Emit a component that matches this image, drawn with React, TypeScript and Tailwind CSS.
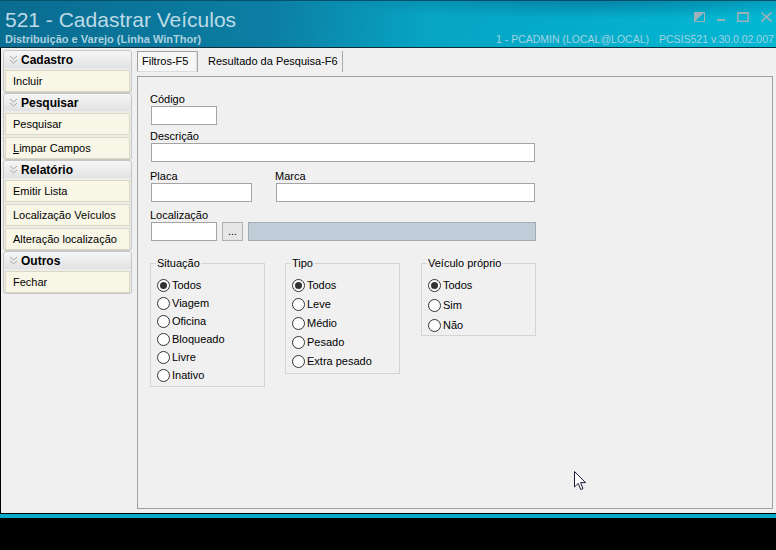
import React from 'react';

const font = "font-['Liberation_Sans',Arial,sans-serif]";

const Chevrons: React.FC = () => (
  <svg width="9" height="9" viewBox="0 0 9 9" className="shrink-0">
    <path d="M1 1 L4.5 4 L8 1 M1 5 L4.5 8 L8 5" fill="none" stroke="#a8a8a8" strokeWidth="1" />
  </svg>
);

interface GroupProps {
  title: string;
  items: { label: React.ReactNode; key: string }[];
}

const SideGroup: React.FC<GroupProps> = ({ title, items }) => (
  <div className="w-[129px] border border-[#c6c6c6] rounded-[3px] bg-[#ececec] flex flex-col">
    <div className="h-[17px] flex items-center gap-[3px] pl-[5px] rounded-t-[3px] bg-[linear-gradient(#f6f6f6,#e2e2e2)]">
      <Chevrons />
      <span className="text-[12px] font-bold text-black leading-none">{title}</span>
    </div>
    <div className="flex flex-col gap-[2px] px-[1px] pt-[2px]">
      {items.map((it) => (
        <div
          key={it.key}
          className="h-[22px] flex items-center pl-[7px] bg-[#f8f6e6] border border-[#dcd8c2] text-[11px] text-black"
        >
          {it.label}
        </div>
      ))}
    </div>
  </div>
);

const Radio: React.FC<{ label: string; checked?: boolean; rowClass: string }> = ({ label, checked, rowClass }) => (
  <div className={`flex items-center ${rowClass}`}>
    <div className="w-[13px] h-[13px] rounded-full border border-[#333] bg-white flex items-center justify-center">
      {checked && <div className="w-[7px] h-[7px] rounded-full bg-[#333]" />}
    </div>
    <span className="ml-[2px] text-[11px] text-black">{label}</span>
  </div>
);

// bodyClass carries the vertical padding of each box
const Group: React.FC<{ legend: string; children: React.ReactNode; bodyClass: string }> = ({ legend, children, bodyClass }) => (
  <fieldset className="w-[115px] border border-[#d4d4d4] m-0 p-0">
    <legend className="ml-[5px] px-[1px] text-[11px] leading-[13px] text-black">{legend}</legend>
    <div className={`flex flex-col pl-[6px] ${bodyClass}`}>{children}</div>
  </fieldset>
);

const Label: React.FC<{ children: React.ReactNode }> = ({ children }) => (
  <div className="h-[14px] leading-[14px] text-[11px] text-black">{children}</div>
);

export default function App() {
  return (
    <div className={`relative w-[776px] h-[550px] bg-black flex flex-col overflow-hidden ${font}`}>
      {/* title bar */}
      <div className="h-[48px] border-t border-[#05506b] border-b border-b-[#0b2f3c] flex flex-col bg-[radial-gradient(ellipse_55%_70%_at_78%_-10%,rgba(8,90,130,0.6),transparent_70%),linear-gradient(100deg,#0a6c91_0%,#0c7ea3_35%,#07a4c4_55%,#02b8d3_100%)]">
        <div className="flex items-start h-[24px] mt-[7px]">
          <span className="ml-[5px] text-[21px] leading-[24px] text-[#bddbe6]">521 - Cadastrar Veículos</span>
          <div className="ml-auto flex items-center gap-[12px] mt-[4px] mr-[4px]">
            <svg width="11" height="10" viewBox="0 0 11 10">
              <rect x="0.5" y="0.5" width="10" height="9" fill="none" stroke="#9db1b9" />
              <path d="M0 0 L11 0 L0 10 Z" fill="#9db1b9" />
            </svg>
            <svg width="8" height="10" viewBox="0 0 8 10">
              <rect x="0" y="7" width="8" height="2" fill="#9db1b9" />
            </svg>
            <svg width="12" height="10" viewBox="0 0 12 10">
              <rect x="0.75" y="1" width="10.5" height="8.25" fill="none" stroke="#9db1b9" strokeWidth="1.5" />
              <rect x="0" y="0" width="12" height="2" fill="#9db1b9" />
            </svg>
            <svg width="11" height="10" viewBox="0 0 11 10">
              <path d="M0.5 0.5 L10.5 9.5 M10.5 0.5 L0.5 9.5" stroke="#9db1b9" strokeWidth="1.6" />
            </svg>
          </div>
        </div>
        <div className="flex items-center h-[13px] mt-[1px]">
          <span className="ml-[5px] text-[11px] font-bold text-[#aad1df]">Distribuição e Varejo (Linha WinThor)</span>
          <div className="ml-auto flex text-[10.5px] text-[#a3d2e2] whitespace-nowrap">
            <span className="w-[163px]">1 - PCADMIN (LOCAL@LOCAL)</span>
            <span className="w-[52px]">PCSIS521</span>
            <span className="w-[65px]">v.30.0.02.007</span>
          </div>
        </div>
        <div className="mt-auto mb-[1px] ml-auto w-[323px] h-[1px] bg-[#f0921e]" />
      </div>

      {/* body */}
      <div className="h-[465px] flex bg-[#f0f0f0] border-l border-black">
        <div className="w-[133px] pl-[2px] pt-[2px] flex flex-col">
          <SideGroup title="Cadastro" items={[{ key: 'i', label: 'Incluir' }]} />
          <SideGroup
            title="Pesquisar"
            items={[
              { key: 'p', label: 'Pesquisar' },
              { key: 'l', label: <span><span className="underline">L</span>impar Campos</span> },
            ]}
          />
          <SideGroup
            title="Relatório"
            items={[
              { key: 'e', label: 'Emitir Lista' },
              { key: 'lv', label: 'Localização Veículos' },
              { key: 'al', label: 'Alteração localização' },
            ]}
          />
          <SideGroup title="Outros" items={[{ key: 'f', label: 'Fechar' }]} />
        </div>

        <div className="flex-1 flex flex-col pl-[3px] pr-[3px] pt-[3px] pb-[4px]">
          <div className="flex h-[21px]">
            <div className="w-[60px] pl-[4px] flex items-center text-[11px] text-black bg-[#f6f6f6] border border-[#a0a0a0] border-r-[#dcdcdc] border-b-[#dcdcdc]">
              Filtros-F5
            </div>
            <div className="w-[146px] pl-[10px] flex items-center text-[11px] text-black border-l border-[#a8a8a8] border-r">
              Resultado da Pesquisa-F6
            </div>
          </div>

          <div className="mt-[4px] flex-1 border border-[#a0a0a0] flex flex-col pl-[12px] pt-[15px]">
            <Label>Código</Label>
            <div className="ml-px w-[66px] h-[19px] bg-white border border-[#a4a4a4]" />

            <div className="mt-[4px]">
              <Label>Descrição</Label>
              <div className="ml-px w-[384px] h-[19px] bg-white border border-[#a4a4a4]" />
            </div>

            <div className="mt-[7px] flex gap-[23px]">
              <div>
                <Label>Placa</Label>
                <div className="ml-px w-[101px] h-[19px] bg-white border border-[#a4a4a4]" />
              </div>
              <div>
                <Label>Marca</Label>
                <div className="ml-px w-[259px] h-[19px] bg-white border border-[#a4a4a4]" />
              </div>
            </div>

            <div className="mt-[6px]">
              <Label>Localização</Label>
              <div className="ml-px flex gap-[5px]">
                <div className="w-[66px] h-[19px] bg-white border border-[#a4a4a4]" />
                <div className="w-[21px] h-[19px] bg-[#e6e6e6] border border-[#b0b0b0] flex items-end justify-center pb-[3px] text-[11px] leading-none text-black">
                  ...
                </div>
                <div className="w-[288px] h-[19px] bg-[#c0ccd8] border border-[#a8acb0]" />
              </div>
            </div>

            <div className="mt-[16px] flex items-start">
              <Group legend="Situação" bodyClass="pt-[6px] pb-[2px]">
                <Radio rowClass="h-[18px]" label="Todos" checked />
                <Radio rowClass="h-[18px]" label="Viagem" />
                <Radio rowClass="h-[18px]" label="Oficina" />
                <Radio rowClass="h-[18px]" label="Bloqueado" />
                <Radio rowClass="h-[18px]" label="Livre" />
                <Radio rowClass="h-[18px]" label="Inativo" />
              </Group>
              <div className="ml-[20px]">
                <Group legend="Tipo" bodyClass="pt-[6px] pb-[2px]">
                  <Radio rowClass="h-[19px]" label="Todos" checked />
                  <Radio rowClass="h-[19px]" label="Leve" />
                  <Radio rowClass="h-[19px]" label="Médio" />
                  <Radio rowClass="h-[19px]" label="Pesado" />
                  <Radio rowClass="h-[19px]" label="Extra pesado" />
                </Group>
              </div>
              <div className="ml-[21px]">
                <Group legend="Veículo próprio" bodyClass="pt-[5px] pb-0">
                  <Radio rowClass="h-[20px]" label="Todos" checked />
                  <Radio rowClass="h-[20px]" label="Sim" />
                  <Radio rowClass="h-[20px]" label="Não" />
                </Group>
              </div>
            </div>
          </div>
        </div>
      </div>

      <div className="h-[1px] bg-black" />
      <div className="h-[4px] bg-[#0aabc8]" />

      {/* mouse cursor */}
      <svg className="absolute left-[574px] top-[471px]" width="13" height="20" viewBox="0 0 13 20">
        <path d="M0.5 0.5 L0.5 16 L4.2 12.4 L6.8 18.6 L9 17.6 L6.5 11.6 L11.5 11.6 Z" fill="#fff" stroke="#1b1a3c" strokeWidth="1" />
      </svg>
    </div>
  );
}
